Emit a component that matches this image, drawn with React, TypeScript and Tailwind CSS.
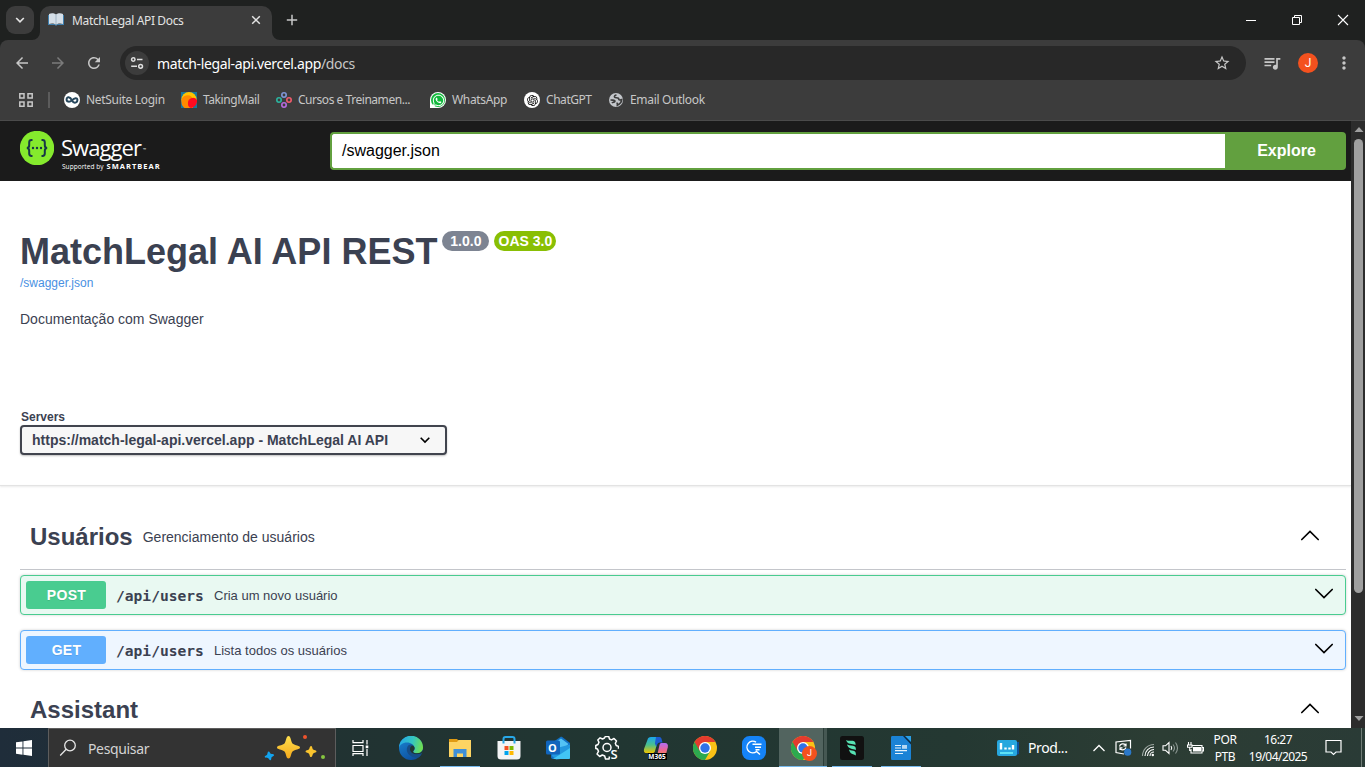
import type { ReactNode } from "react";
import { MdArrowBack, MdArrowForward, MdRefresh, MdStarBorder, MdQueueMusic, MdMoreVert } from "react-icons/md";
import { RiOpenaiFill } from "react-icons/ri";
import { FaWhatsapp } from "react-icons/fa";

const ui = "font-['Noto_Sans',sans-serif]";

function BookIcon() {
  return (
    <svg width="16" height="16" viewBox="0 0 16 16">
      <path d="M0 3h1v9h6l1 .8L9 12h6V3h1v10H9.2L8 14l-1.200-1H0z" fill="#3f7fae" />
      <path d="M1 2c2-1.200 5-1.200 7 .5C10 .8 13 .8 15 2v10c-2-.8-5-.8-7 .6C6 11.200 3 11.200 1 12z" fill="#d5dfe8" />
      <path d="M8 2.500v10" stroke="#9fb3c4" strokeWidth="1" />
    </svg>
  );
}

function TuneIcon() {
  return (
    <svg width="14" height="14" viewBox="0 0 14 14" fill="none" stroke="#dedede" strokeWidth="1.500">
      <circle cx="3.300" cy="3.500" r="1.700" />
      <path d="M7 3.500h5.500M1.200 10.300H7" />
      <circle cx="10.600" cy="10.300" r="1.900" />
    </svg>
  );
}

function TabStrip() {
  return (
    <header className="flex h-10 items-start bg-[#1f2120]">
      <button className="ml-1.5 mt-1.5 flex h-7 w-7 items-center justify-center rounded-[9px] bg-[#3c3c3c]">
        <svg width="10" height="8" viewBox="0 0 10 8" fill="none" stroke="#e3e3e3" strokeWidth="1.700"><path d="M1.200 2 5 5.800 8.800 2" /></svg>
      </button>
      <svg className="-ml-0.5 mt-8" width="8" height="8" viewBox="0 0 8 8"><path d="M8 0v8H0a8 8 0 0 0 8-8z" fill="#3c3c3c" /></svg>
      <div className="mt-1.5 flex h-[34px] w-[232px] items-center rounded-t-[10px] bg-[#3c3c3c] pb-1.5 pl-2 pr-2.5">
        <BookIcon />
        <span className="ml-2 pt-0.5 text-[12px] leading-4 tracking-[-0.35px] text-[#e3e3e3]">MatchLegal API Docs</span>
        <svg className="ml-auto" width="12" height="12" viewBox="0 0 12 12" stroke="#e3e3e3" strokeWidth="1.500"><path d="m2.200 2.200 7.600 7.600M9.800 2.200 2.200 9.800" /></svg>
      </div>
      <svg className="mt-8" width="8" height="8" viewBox="0 0 8 8"><path d="M0 0v8h8a8 8 0 0 1-8-8z" fill="#3c3c3c" /></svg>
      <svg className="ml-1.5 mt-3.5" width="12" height="12" viewBox="0 0 12 12" stroke="#c7c7c7" strokeWidth="1.500"><path d="M6 .8v10.400M.8 6h10.400" /></svg>
      <div className="ml-auto mt-3.5 flex items-center">
        <svg width="12" height="12" viewBox="0 0 12 12" stroke="#fff" strokeWidth="1"><path d="M1 6.500h10" /></svg>
        <svg className="ml-[34px]" width="12" height="12" viewBox="0 0 12 12" fill="none" stroke="#fff" strokeWidth="1"><path d="M1.500 3.500h7v7h-7zM3.500 3.500v-2h7v7h-2" /></svg>
        <svg className="ml-[34px] mr-4" width="12" height="12" viewBox="0 0 12 12" stroke="#fff" strokeWidth="1.100"><path d="m1 1 10 10M11 1 1 11" /></svg>
      </div>
    </header>
  );
}

function AddressBar() {
  return (
    <div className="flex h-[46px] items-center">
      <MdArrowBack className="ml-[13px] text-[#c7c7c7]" size={18} />
      <MdArrowForward className="ml-[18px] text-[#7b7b7b]" size={18} />
      <MdRefresh className="ml-[18px] text-[#c7c7c7]" size={18} />
      <div className="ml-[17px] flex h-[34px] w-[1126px] items-center rounded-full bg-[#282828] pl-[5px] pr-[15px]">
        <span className="flex h-6 w-6 items-center justify-center rounded-full bg-[#3c3c3c]"><TuneIcon /></span>
        <span className="ml-2 pt-px text-[14px] leading-5 tracking-[-0.36px] text-white">match-legal-api.vercel.app<span className="text-[#c7c7c7]">/docs</span></span>
        <MdStarBorder className="ml-auto text-[#c7c7c7]" size={18} />
      </div>
      <MdQueueMusic className="ml-[16px] text-[#c7c7c7]" size={20} />
      <span className="ml-[16px] flex h-5 w-5 items-center justify-center rounded-full bg-[#f4511e] font-['Roboto',sans-serif] text-[12px] text-white">J</span>
      <MdMoreVert className="ml-[16px] text-[#c7c7c7]" size={20} />
    </div>
  );
}

function Bookmark({ icon, label, className }: { icon: ReactNode; label: string; className: string }) {
  return (
    <a className={`flex shrink-0 items-center gap-1.5 whitespace-nowrap text-[12px] leading-4 text-[#c7c7c7] ${className}`}>
      <span className="flex h-4 w-4 shrink-0 items-center justify-center">{icon}</span>
      {label}
    </a>
  );
}

function Bookmarks() {
  return (
    <nav className="flex h-[35px] items-center border-b border-[#4b4b4b] pb-[6px]">
      <svg className="ml-[18px]" width="16" height="16" viewBox="0 0 16 16" fill="none" stroke="#c7c7c7" strokeWidth="1.500">
        <path d="M1.800 1.800h4.200v4.200H1.800zM10 1.800h4.200v4.200H10zM1.800 10h4.200v4.200H1.800zM10 10h4.200v4.200H10z" />
      </svg>
      <span className="ml-3.5 mr-[14px] h-4 w-[2px] bg-[#5c5c5c]" />
      <Bookmark className="w-[117px] tracking-[-0.3px]" label="NetSuite Login" icon={
        <svg width="16" height="16" viewBox="0 0 16 16"><circle cx="8" cy="8" r="8" fill="#fff" /><path d="M8 8.500C6 4.500 2.800 4.500 2.600 7.200S5.500 10.500 8 8.200s5.300-3 5.400-.3-3.400 4.300-5.400.6" fill="none" stroke="#27475c" strokeWidth="2" /></svg>
      } />
      <Bookmark className="w-[95px] tracking-[-0.42px]" label="TakingMail" icon={
        <svg width="16" height="16" viewBox="0 0 16 16"><path fill="#17779c" d="M0 0h16v16H0z" /><circle cx="8" cy="7.600" r="7.600" fill="#ffc400" /><path d="M.5 10a6 6 0 0 1 11.500-3v9H3.500A7 7 0 0 1 .5 10z" fill="#ff8a00" /><path d="M7 11.500a5 5 0 0 1 9-3.500c.4 4-2 7-6 8a4.500 4.500 0 0 1-3-4.500z" fill="#ff0b20" /></svg>
      } />
      <Bookmark className="w-[154px] tracking-[-0.46px]" label="Cursos e Treinamen..." icon={
        <svg width="16" height="16" viewBox="0 0 16 16" fill="none" strokeWidth="1.600"><circle cx="8" cy="3" r="2.200" stroke="#7f97d8" /><circle cx="3" cy="8" r="2.200" stroke="#2bb5a0" /><circle cx="13" cy="8" r="2.200" stroke="#ef5b6c" /><circle cx="8" cy="13" r="2.200" stroke="#b56be0" /></svg>
      } />
      <Bookmark className="w-[94px] tracking-[-0.35px]" label="WhatsApp" icon={
        <span className="flex h-4 w-4 items-center justify-center rounded-full rounded-bl-[3px] bg-white"><span className="flex h-3.5 w-3.5 items-center justify-center rounded-full bg-[#12b83c] text-white"><FaWhatsapp size={13} /></span></span>
      } />
      <Bookmark className="w-[84px] tracking-[-0.45px]" label="ChatGPT" icon={
        <span className="flex h-4 w-4 items-center justify-center rounded-full bg-white text-black"><RiOpenaiFill size={13} /></span>
      } />
      <Bookmark className="tracking-[-0.33px]" label="Email Outlook" icon={
        <svg width="14" height="14" viewBox="0 0 14 14"><circle cx="7" cy="7" r="7" fill="#c3c6ca" /><path d="M7.500 2c-1.500.2-2.500 1.200-1.800 2.200.7.900 2.600.2 3.500 1 .9.900.3 1.800 1.700 1.800.8 0 1.200-.5 1.800-.5-.2 2.800-2 4.700-4.300 5.600.1-1 .2-1.800-.8-2.300M1.500 7c1.500 0 2.300.2 3.500.3 1 .1 1.300 1.300.3 1.700-.8.400-1.800.2-2.300 1" fill="none" stroke="#3c3c3c" strokeWidth="1.700" /></svg>
      } />
    </nav>
  );
}

function SwaggerLogo() {
  return (
    <div className="flex w-[310px] items-start pt-2.5">
      <svg width="34" height="34" viewBox="0 0 34 34">
        <circle cx="17" cy="17" r="17.200" fill="#85ea2d" />
        <path d="M12.500 9h-1c-1.700 0-2.300.9-2.300 2.400v2.800c0 1.700-.8 2.800-2.400 2.800 1.600 0 2.400 1.100 2.400 2.800v2.800c0 1.500.6 2.400 2.300 2.400h1M21.500 9h1c1.700 0 2.300.9 2.300 2.400v2.800c0 1.700.8 2.800 2.400 2.800-1.600 0-2.400 1.100-2.400 2.800v2.800c0 1.500-.6 2.400-2.300 2.400h-1" fill="none" stroke="#173647" strokeWidth="2" />
        <circle cx="13" cy="17" r="1.200" fill="#173647" /><circle cx="17" cy="17" r="1.200" fill="#173647" /><circle cx="21" cy="17" r="1.200" fill="#173647" />
      </svg>
      <div className="ml-[7px] mt-[4px] flex flex-col font-['Open_Sans',sans-serif] text-white">
        <span className="flex items-end text-[22px] font-normal leading-6 tracking-[-0.95px]">Swagger<span className="pb-[3px] pl-[2px] text-[4px] leading-3">™</span></span>
        <span className="flex items-baseline gap-[3px] whitespace-nowrap pl-px pt-[2px] text-[6.5px] leading-[10px]">
          <span className="tracking-[0.05px]">Supported by</span>
          <b className="text-[7.500px] tracking-[1px]">SMARTBEAR</b>
        </span>
      </div>
    </div>
  );
}

function Chevron({ up = false, className = "" }: { up?: boolean; className?: string }) {
  return (
    <svg className={className} width="20" height="12" viewBox="0 0 20 12" fill="none" stroke="#000" strokeWidth="1.700" strokeLinecap="round">
      <path d={up ? "M1.800 9.500 10 1.500 18.200 9.500" : "M1.800 1.500 10 9.500l8.200-8"} />
    </svg>
  );
}

function TagHeader({ title, description }: { title: string; description?: string }) {
  return (
    <div className="flex items-center pl-2.5 pr-[26px]">
      <h3 className="text-[24px] font-bold leading-7">{title}</h3>
      {description && <span className="ml-[10px] text-[14px] leading-5">{description}</span>}
      <Chevron up className="-mt-0.5 ml-auto" />
    </div>
  );
}

function Operation({ method, summary, box, badge }: { method: string; summary: string; box: string; badge: string }) {
  return (
    <div className={`flex h-10 items-center rounded border pl-[5px] pr-[11px] shadow-[0_0_3px_rgba(0,0,0,0.19)] ${box}`}>
      <span className={`flex h-7 w-20 items-center justify-center rounded-[3px] pl-px text-[14px] font-bold tracking-[0.3px] text-white [text-shadow:0_1px_0_rgba(0,0,0,0.1)] ${badge}`}>{method}</span>
      <span className="ml-[10px] mt-0.5 w-[98px] font-['DejaVu_Sans_Mono',monospace] text-[14.6px] font-bold leading-5">/api/users</span>
      <span className="pt-0.5 text-[13px] leading-5">{summary}</span>
      <Chevron className="-mt-[3px] ml-auto" />
    </div>
  );
}

function SwaggerPage() {
  return (
    <main className="flex h-[607px] overflow-hidden bg-white">
      <div className="w-[1351px] font-['Liberation_Sans',sans-serif] text-[#3b4151]">
        <div className="flex h-[60px] bg-[#1b1b1b] pl-5 pr-[5px]">
          <SwaggerLogo />
          <div className="mt-[11px] flex h-[38px] flex-1">
            <div className="flex flex-1 items-center rounded-l border-2 border-r-0 border-[#62a03f] bg-white pl-2.5 text-[16px] text-black">/swagger.json</div>
            <button className="w-[121px] rounded-r bg-[#62a03f] pl-0.5 text-[16px] font-bold text-white">Explore</button>
          </div>
        </div>

        <section className="flex h-[304px] flex-col px-5 pt-[49px]">
          <div className="flex items-start">
            <h1 className="pt-[1px] text-[36px] font-bold leading-[41px]">MatchLegal AI API REST</h1>
            <span className="ml-[5px] mt-[1px] flex h-5 w-[47px] items-center justify-center rounded-full bg-[#7d8492] text-[14px] font-bold text-white">1.0.0</span>
            <span className="ml-[5px] mt-[1px] flex h-5 w-[62px] items-center justify-center whitespace-nowrap rounded-full bg-[#89bf04] text-[14px] font-bold text-white">OAS 3.0</span>
          </div>
          <a className="mt-[3px] text-[12px] leading-4 text-[#4990e2]">/swagger.json</a>
          <p className="mt-[18px] text-[14px] leading-5">Documentação com Swagger</p>
          <label className="ml-[1px] mt-[80px] text-[12px] font-bold leading-4">Servers</label>
          <div className="flex h-[30px] w-[427px] items-center rounded border-2 border-[#41444e] bg-[#f7f7f7] pl-2.5 pr-[15px] text-[14px] font-bold shadow-[0_1px_2px_rgba(0,0,0,0.25)]">
            https://match-legal-api.vercel.app - MatchLegal AI API
            <svg className="ml-auto" width="10" height="8" viewBox="0 0 10 8" fill="none" stroke="#000" strokeWidth="1.600"><path d="M.7 1.700 5 6 9.300 1.700" /></svg>
          </div>
        </section>
        <div className="h-px bg-[#e3e3e3] shadow-[0_1px_2px_rgba(0,0,0,0.12)]" />

        <section className="flex flex-col pl-5 pr-[5px] pt-[37px]">
          <TagHeader title="Usuários" description="Gerenciamento de usuários" />
          <div className="mb-[5px] mt-[18px] h-px bg-[#c4c6cb]" />
          <Operation method="POST" summary="Cria um novo usuário" box="border-[#49cc90] bg-[#e9f9f2]" badge="bg-[#49cc90]" />
          <div className="h-[15px]" />
          <Operation method="GET" summary="Lista todos os usuários" box="border-[#61affe] bg-[#eef6ff]" badge="bg-[#61affe]" />
          <div className="h-[26px]" />
          <TagHeader title="Assistant" />
        </section>
      </div>
      <div className="flex w-3.5 flex-col items-center bg-[#2c2c2c] pl-px">
        <svg className="mt-1.5" width="10" height="5" viewBox="0 0 10 5"><path d="M.5 5 5 0l4.500 5z" fill="#9f9f9f" /></svg>
        <div className="mt-[7px] h-[454px] w-[9px] rounded-full bg-[#9f9f9f]" />
        <svg className="mb-[7px] mt-auto" width="10" height="5" viewBox="0 0 10 5"><path d="M.5 0 5 5l4.500-5z" fill="#9f9f9f" /></svg>
      </div>
    </main>
  );
}

function ChromeLogo() {
  return (
    <svg width="24" height="24" viewBox="0 0 24 24">
      <circle cx="12" cy="12" r="12" fill="#fbc116" />
      <path d="M12 12 1.600 6A12 12 0 0 0 12 24l5.200-9z" fill="#2da94f" />
      <path d="M12 6h10.400A12 12 0 0 0 1.600 6l5.200 9L12 12z" fill="#e33b2e" />
      <circle cx="12" cy="12" r="6" fill="#fff" />
      <circle cx="12" cy="12" r="4.700" fill="#2f72e8" />
    </svg>
  );
}

function TaskItem({ children, className = "", line = "" }: { children: ReactNode; className?: string; line?: string }) {
  return (
    <div className={`flex h-[39px] w-[49px] shrink-0 flex-col items-center ${className}`}>
      <div className="flex h-[38px] items-center justify-center pt-[2px]">{children}</div>
      {line && <div className={`h-px bg-[#76b9ed] ${line}`} />}
    </div>
  );
}

function Sparkles() {
  return (
    <svg className="ml-auto mr-2" width="64" height="28" viewBox="0 0 64 28">
      <defs><linearGradient id="gold" x1="0" y1="0" x2="0" y2="1"><stop offset="0" stopColor="#ffdf4d" /><stop offset="1" stopColor="#f4a91c" /></linearGradient></defs>
      <path d="M25.500 2c2.600 0 2.200 6 4.300 7.800S37 11.500 37 13.500s-5.200 2-7.200 3.700-1.700 7.300-4.300 7.300-2.200-5.600-4.300-7.300-7.200-1.700-7.200-3.700 5.200-2 7.200-3.700S22.900 2 25.500 2z" fill="url(#gold)" />
      <path d="M48 12c1.400 0 1.200 2.700 2.200 3.600s3.300.7 3.300 1.900-2.500 1-3.300 1.900-.8 3.600-2.200 3.600-1.200-2.700-2.200-3.600-3.300-.7-3.300-1.900 2.500-1 3.300-1.900.8-3.600 2.200-3.600z" fill="#fac42e" />
      <path d="M5.500 17.500c1.300-.3 1.300 1.800 2.300 2.300s2.900.1 3.200 1.100-1.900 1.400-2.400 2.300-.1 2.700-1.100 3-1.600-1.700-2.600-2.200-2.900 0-3.200-1.100 1.900-1.300 2.400-2.200.4-2.900 1.400-3.200z" fill="#12a4ef" />
      <circle cx="42" cy="3" r="2" fill="#f0532d" /><circle cx="60" cy="23" r="2" fill="#86c540" />
    </svg>
  );
}

function Taskbar() {
  return (
    <footer className="flex h-[39px] items-center overflow-hidden bg-[linear-gradient(90deg,#1f2d3a_0%,#213232_23%,#213632_45%,#243832_70%,#2c3d34_85%,#2a3b36_100%)]">
      <div className="flex w-12 justify-center">
        <svg width="16" height="16" viewBox="0 0 16 16" fill="#fff"><path d="M0 2.300 6.500 1.400v6.200H0zM7.400 1.300 16 0v7.600H7.400zM0 8.500h6.500v6.200L0 13.800zM7.400 8.500H16V16l-8.600-1.200z" /></svg>
      </div>
      <div className="flex h-full w-[288px] items-center border-x border-t border-[#5d5d5d] bg-[#333]">
        <svg className="ml-2.5" width="18" height="18" viewBox="0 0 18 18" fill="none" stroke="#e6e6e6" strokeWidth="1.300"><circle cx="11" cy="6.500" r="5.300" /><path d="m7.200 10.300-6 6.200" /></svg>
        <span className="ml-[11px] pt-px text-[14px] tracking-[-0.35px] text-[#d3d3d3]">Pesquisar</span>
        <Sparkles />
      </div>
      <div className="w-px" />
      <TaskItem>
        <svg className="-ml-[3px]" width="17" height="16" viewBox="0 0 17 16" fill="none" stroke="#fff" strokeWidth="1.200"><path d="M1 0v2.700h10V0M1 5.500h10v6H1zM1 16v-2.300h10V16M15 0v4.500M15 9v7" /><path d="M13.700 5.500h2.600v2.700h-2.600z" fill="#fff" stroke="none" /></svg>
      </TaskItem>
      <TaskItem>
        <svg width="24" height="24" viewBox="0 0 24 24">
          <defs>
            <linearGradient id="edgeTop" x1="0" y1=".3" x2="1" y2=".5"><stop offset="0" stopColor="#24a8e8" /><stop offset=".55" stopColor="#35c6c0" /><stop offset="1" stopColor="#70df4e" /></linearGradient>
            <linearGradient id="edgeBottom" x1="0" y1="0" x2=".6" y2="1"><stop offset="0" stopColor="#1b87d4" /><stop offset="1" stopColor="#0d4f9f" /></linearGradient>
          </defs>
          <circle cx="12" cy="12" r="12" fill="url(#edgeBottom)" />
          <path d="M0 12A12 12 0 0 1 24 11.500c0 4-3 5.800-6 5.800-2.600 0-4-1-3.700-1.800.2-.5 1.200-1 1.200-3C15.500 9 12 6.500 8 6.500c-4.500 0-7.500 2.500-8 5.500z" fill="url(#edgeTop)" />
          <path d="M15.500 12.200c0-2-1.700-3.600-3.500-3.700-4 0-5 5-3.500 8 1.800 3.500 6 5.500 10.500 5.200 1.800-1.200 3-2.500 3.800-4.300-1.500.8-3 1-4.800 1-3 0-4.800-1.600-4.200-3 .4-.9 1.700-1.200 1.700-3.200z" fill="#164d88" />
          <path d="M15.500 12.200c0 2-1.400 2.400-1.500 3.400.1 1.500 2.500 1.700 4 1.700 3 0 5-1.300 5.700-3.300l.1 2c-1 1.600-3.200 2.200-5.800 2.200-3.500 0-7-2-7-5 0-2 1.200-3.500 2.500-3.500 1.200.2 2 1.200 2 2.500z" fill="#213530" />
        </svg>
      </TaskItem>
      <TaskItem line="w-10">
        <svg width="22" height="20" viewBox="0 0 22 20"><path d="M0 1h8l2 2v4H0z" fill="#e09b13" /><path d="M0 4h8l1.500-2H22v17H0z" fill="#fdd463" /><path d="M4.500 11h13v8h-3.500v-3.500H8V19H4.500z" fill="#3f8fd8" /></svg>
      </TaskItem>
      <TaskItem>
        <svg width="24" height="24" viewBox="0 0 24 24"><path d="M.5 5h23v15a3.500 3.500 0 0 1-3.500 3.500H4A3.500 3.500 0 0 1 .5 20z" fill="#f3f4f5" /><path d="M6.500 7.500V3a2 2 0 0 1 2-2h7a2 2 0 0 1 2 2v4.500" fill="none" stroke="#28a8e8" strokeWidth="2" /><path fill="#f25022" d="M7.500 10h4v4h-4z" /><path fill="#7fba00" d="M12.500 10h4v4h-4z" /><path fill="#00a4ef" d="M7.500 15h4v4h-4z" /><path fill="#ffb900" d="M12.500 15h4v4h-4z" /></svg>
      </TaskItem>
      <TaskItem>
        <div className="relative">
          <svg width="24" height="24" viewBox="0 0 24 24"><path d="M5 7.500 14 1.200c1-.6 1.500-.6 2.500 0L24 7v14.500c0 1-.7 1.500-1.500 1.500H7c-1.200 0-2-.8-2-2z" fill="#1270c4" /><path d="m8 7 7-4.500L22.500 8 14 16z" fill="#53c3f5" /><path d="M7 13 24 8.500V22L10 23.500 6 20z" fill="#2398df" /><path d="m7 23 17-11v9.500c0 1-.7 1.500-1.500 1.500z" fill="#42c5f5" /><rect y="4.500" width="14" height="14" rx="1.500" fill="#1165bd" /></svg>
          <span className="absolute left-0 top-[5px] w-[14px] text-center font-['Open_Sans',sans-serif] text-[11px] font-bold leading-[13px] text-white">O</span>
        </div>
      </TaskItem>
      <TaskItem>
        <div className="relative">
          <svg width="24" height="24" viewBox="0 0 24 24" fill="none" stroke="#fff" strokeWidth="1.500" strokeLinejoin="round"><path d="M14.500 20.500 14 23h-3.500L9.700 20l-2.400-1-2.600 1.500L2 18l1.500-2.600-1-2.400L.8 12.500V9.500L3 8.500l1-2.200L2.800 4l2.300-2.200 2.400 1.200L9.500 2l.8-1.500h3.400L14.500 3l2 .9L19 2.500 21.500 5 20.300 7.300l.9 2.200 2.300.9v2.300" /><circle cx="12" cy="11.500" r="4" /></svg>
          <span className="absolute left-[16px] top-[11px] font-['Open_Sans',sans-serif] text-[13px] font-semibold leading-[14px] text-white">S</span>
        </div>
      </TaskItem>
      <TaskItem>
        <div className="relative">
          <svg width="26" height="24" viewBox="0 0 26 24">
            <defs>
              <linearGradient id="copA" x1="0" y1="0" x2="0" y2="1"><stop offset="0" stopColor="#1aa6ef" /><stop offset=".5" stopColor="#4cc08a" /><stop offset="1" stopColor="#f0c400" /></linearGradient>
              <linearGradient id="copB" x1=".5" y1="0" x2=".5" y2="1"><stop offset="0" stopColor="#b26cf5" /><stop offset=".5" stopColor="#e9669a" /><stop offset="1" stopColor="#ff8a4c" /></linearGradient>
            </defs>
            <path d="M8 1h8l-4 14c-.4 1.500-1.200 2-2.500 2H3.500c-2.500 0-3-2-2.300-4.500L4.500 3.800C5 2 6 1 8 1z" fill="url(#copA)" />
            <path d="M13 1h3.500c1.300 0 1.900 1 2.300 2.800l.7 2.700h-2.500c-1.500 0-2.300.7-2.800 2l-.8 2.500-1.500-3.500z" fill="#1c5bd0" />
            <path d="M18.500 7H22c2.300 0 3.400 1.700 2.800 4.200L22.500 20H14l2.500-11c.3-1.300.8-2 2-2z" fill="url(#copB)" />
          </svg>
          <span className="absolute left-[5px] top-[17px] flex h-[7px] w-[19px] items-center justify-center bg-black text-[6.500px] font-bold leading-[7px] text-white">M365</span>
        </div>
      </TaskItem>
      <TaskItem><ChromeLogo /></TaskItem>
      <TaskItem>
        <svg width="24" height="24" viewBox="0 0 24 24"><rect width="24" height="24" rx="7.500" fill="#1583f7" /><path d="M14 6.200A5.800 5.800 0 1 0 14.500 15.500l3.500 3M10.500 8.300h9M13 11.300h6M13.500 13.800h4" fill="none" stroke="#fff" strokeWidth="1.400" /></svg>
      </TaskItem>
      <TaskItem className="border-l border-[#213632] bg-[linear-gradient(90deg,#52645f_0_44px,#2c3e39_44px_45px,#465853_45px)]" line="w-12">
        <div className="relative">
          <ChromeLogo />
          <span className="absolute left-[11px] top-[10px] flex h-[15px] w-[15px] items-center justify-center rounded-full bg-[#f4511e] font-['Roboto',sans-serif] text-[9px] leading-none text-white">J</span>
        </div>
      </TaskItem>
      <TaskItem line="w-10">
        <svg width="24" height="24" viewBox="0 0 24 24"><rect width="24" height="24" rx="2.500" fill="#111" /><path d="M6 4c3 1.500 6 0 8.500 1.500 1 .8 1.200 2 1 3.500-3-1.500-8 0-9.500-5zM7 8.500c3 1.500 5.500.5 8 2 .8.800 1 2 .8 3.500-3-1.500-7.500-.5-8.800-5.500zM9 13.500c2 1.200 4 .8 6 2 .8.800 1 2.300.8 4-2-1.700-6-1-6.800-6z" fill="#57e3b4" /></svg>
      </TaskItem>
      <TaskItem line="w-10">
        <svg width="20" height="24" viewBox="0 0 20 24"><path d="M1.500 0H13l7 7.500V22.500c0 1-.5 1.500-1.500 1.500h-17C.5 24 0 23.500 0 22.500v-21C0 .5.500 0 1.500 0z" fill="#1b83d6" /><path d="M12 0h8v8.500z" fill="#0c2c46" /><path d="M14 0h6v6z" fill="#2aa0e8" /><path d="M4 9.500h6M4 12h6M4 14.700h12M4 17.500h8" stroke="#e5f2fc" strokeWidth="1.200" /><path d="M11 9h5v3.800h-5z" fill="#b4d8f3" /></svg>
      </TaskItem>

      <div className="ml-[72px] flex items-center text-white">
        <svg width="22" height="18" viewBox="0 0 22 18"><path d="M18 3h4v12l-3 1z" fill="#0c4f98" /><rect y="1" width="20" height="16" rx="2" fill="#27a7de" /><path d="M4 4v6.500M8.500 8.500v2M12.500 8.500v2M16 6v4.500" stroke="#fff" strokeWidth="2.400" /><path d="M3 14h13" stroke="#5ee1f5" strokeWidth="2" /></svg>
        <span className="ml-[9px] w-[64px] text-[14px] tracking-[-0.4px]">Prod...</span>
        <svg width="14" height="8" viewBox="0 0 14 8" fill="none" stroke="#fff" strokeWidth="1.300"><path d="M1.500 7 7 1.500 12.500 7" /></svg>
        <svg className="ml-[9px]" width="17" height="17" viewBox="0 0 17 17" fill="none" stroke="#fff" strokeWidth="1.200"><path d="M9 15 1 13.500V3L15.500 1.500v8M4.500 7.500A3.500 3.500 0 0 1 10.500 6M11 4.500V7H8.500M5 11V8.800h2.500M11 8.500A3.500 3.500 0 0 1 5.500 10" /><circle cx="12.700" cy="13.200" r="3.600" fill="#2b78c8" stroke="none" /></svg>
        <svg className="ml-[9px] mt-1" width="14" height="14" viewBox="0 0 14 14" fill="none" strokeWidth="1.100"><path d="M1.500 13A11.500 11.500 0 0 1 13 1.500" stroke="#9ba5a0" /><path d="M4 13a9 9 0 0 1 9-9M6.500 13A6.500 6.500 0 0 1 13 6.500M9 13a4 4 0 0 1 4-4" stroke="#fff" /><circle cx="11.800" cy="12" r="1.200" fill="#fff" /></svg>
        <svg className="ml-[7px]" width="17" height="14" viewBox="0 0 17 14" fill="none" stroke="#fff" strokeWidth="1.100"><path d="M1 4.800h2.500L7 1.500v11L3.500 9.300H1zM9 5q1.500 2 0 4" /><path d="M11 3.500q3 3.500 0 7M13.500 1.500q4 5.500 0 11" stroke="#8f9a95" /></svg>
        <svg className="ml-[8px]" width="17" height="12" viewBox="0 0 17 12" fill="none" stroke="#fff" strokeWidth="1.100"><path d="M5 3.500h10v7.500H4V7M15.500 5.500h1v3.500h-1" /><path d="M6 5h8v4.500H6z" fill="#fff" stroke="none" /><path d="M1.500 0v2.500M4 0v2.500M.5 3h4.500v2.200H.5zM2.700 5v3.500H4" /></svg>
        <div className="ml-[6px] flex w-[30px] flex-col items-center text-[12px] leading-[17px] tracking-[-0.4px]"><span>POR</span><span>PTB</span></div>
        <div className="ml-2 flex w-[60px] flex-col items-center whitespace-nowrap text-[12px] leading-[17px] tracking-[-0.55px]"><span>16:27</span><span>19/04/2025</span></div>
        <svg className="ml-[17px]" width="17" height="17" viewBox="0 0 17 17" fill="none" stroke="#fff" strokeWidth="1.200"><path d="M1 1.500h15v11.500h-5L8.500 15.500 6 13H1z" /></svg>
      </div>
      <div className="ml-auto mr-[3px] h-full w-px bg-[#6f7c76]" />
    </footer>
  );
}

export default function App() {
  return (
    <div className={`flex h-[767px] w-[1365px] flex-col overflow-hidden ${ui}`}>
      <TabStrip />
      <div className="bg-[#1f2120]">
        <div className="rounded-t-lg bg-[#3c3c3c]">
          <AddressBar />
          <Bookmarks />
        </div>
      </div>
      <SwaggerPage />
      <Taskbar />
    </div>
  );
}
